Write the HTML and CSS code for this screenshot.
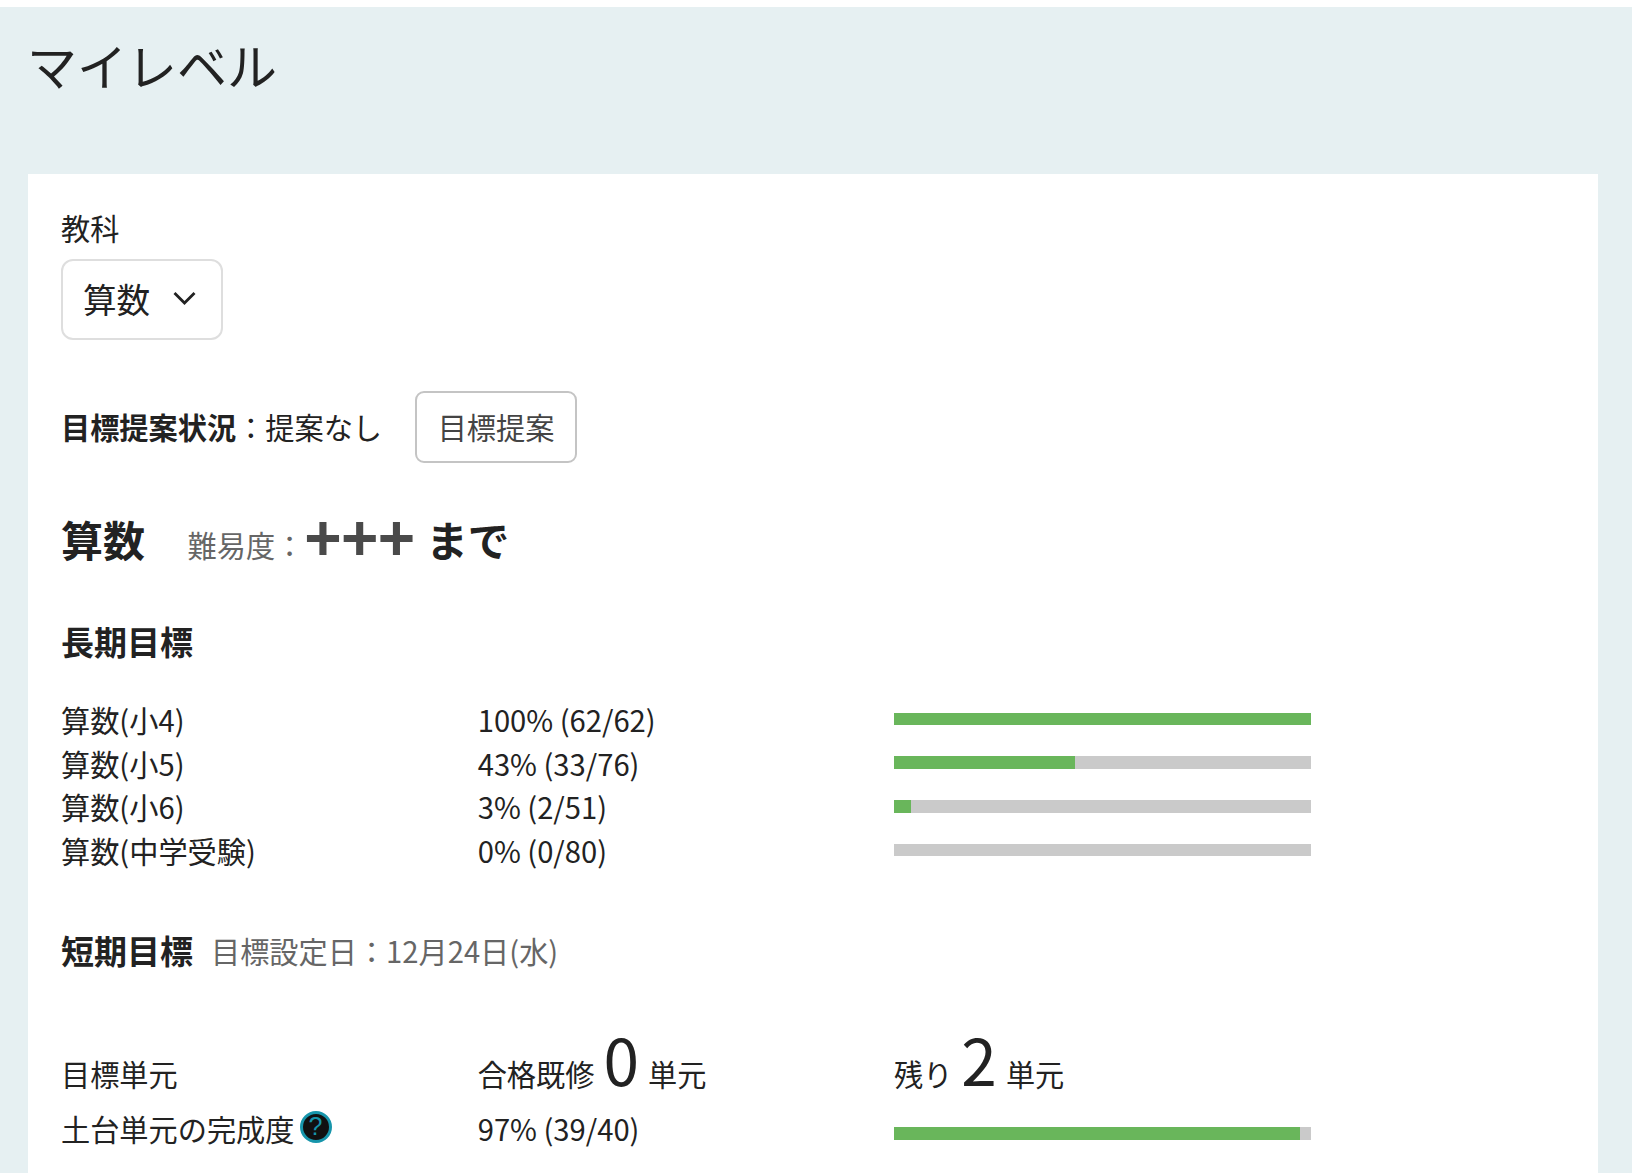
FILE: index.html
```html
<!DOCTYPE html>
<html lang="ja">
<head>
<meta charset="utf-8">
<title>マイレベル</title>
<link rel="stylesheet" href="styles.css">
</head>
<body>
<main class="page">
  <h1 class="page-title">マイレベル</h1>
  <section class="card">
    <div class="field-label">教科</div>
    <div class="select">
      <span>算数</span>
      <svg class="chevron" viewBox="0 0 24 14" aria-hidden="true"><path d="M2 2l10 10L22 2"/></svg>
    </div>
    <div class="proposal">
      <div class="proposal-text"><strong>目標提案状況</strong>：提案なし</div>
      <button class="btn" type="button">目標提案</button>
    </div>
    <div class="subject">
      <h2 class="subject-name">算数</h2>
      <span class="difficulty">難易度：</span><span class="plus">+++</span>
      <span class="until">まで</span>
    </div>
    <h3 class="section-title">長期目標</h3>
    <div class="rows">
      <div>算数(小4)</div><div>100% (62/62)</div><div class="bar"><div class="fill" style="width:100%"></div></div>
      <div>算数(小5)</div><div>43% (33/76)</div><div class="bar"><div class="fill" style="width:43.4%"></div></div>
      <div>算数(小6)</div><div>3% (2/51)</div><div class="bar"><div class="fill" style="width:4%"></div></div>
      <div>算数(中学受験)</div><div>0% (0/80)</div><div class="bar"></div>
    </div>
    <div class="short-head">
      <h3 class="section-title short-title">短期目標</h3>
      <span class="date">目標設定日：12月24日(水)</span>
    </div>
    <div class="goal-rows">
      <div class="goal-cell">目標単元</div>
      <div class="goal-cell">合格既修<span class="big">0</span>単元</div>
      <div class="goal-cell">残り<span class="big">2</span>単元</div>
      <div class="found-label">土台単元の完成度<span class="help">?</span></div>
      <div class="found-value">97% (39/40)</div>
      <div class="bar found-bar"><div class="fill" style="width:97.3%"></div></div>
    </div>
  </section>
</main>
</body>
</html>
```
FILE: styles.css
```css
* { box-sizing: border-box; }
html, body { margin: 0; height: 100%; background: #fff; }
body {
  padding-top: 7px;
  overflow: hidden;
  font-family: "Noto Sans CJK JP", "Noto Sans", sans-serif;
  font-size: 29.2px;
  line-height: 1.5;
  color: #222;
}
.page {
  height: 100%;
  background: #e6f0f2;
  padding: 0 34px 0 28px;
  overflow: hidden;
}
.page-title {
  margin: 0 0 0 -1px;
  height: 167px;
  padding-top: 19px;
  font-size: 50px;
  font-weight: 400;
  line-height: 76px;
}
.card {
  background: #fff;
  height: 1100px;
  padding: 31px 33px 0;
}
.field-label { line-height: 44px; }
.select {
  margin-top: 10px;
  width: 162px;
  height: 81px;
  border: 2px solid #dedede;
  border-radius: 12px;
  display: flex;
  align-items: center;
  padding: 0 0 0 20px;
  font-size: 33.6px;
}
.chevron {
  width: 25px;
  height: 14px;
  margin: 0 0 3px 22px;
  fill: none;
  stroke: #222;
  stroke-width: 2.8;
}
.proposal {
  margin-top: 51px;
  display: flex;
  align-items: center;
  gap: 33px;
}
.proposal-text strong { font-weight: 700; }
.btn {
  width: 162px;
  height: 72px;
  padding: 0;
  background: #fff;
  border: 2px solid #c4c4c4;
  border-radius: 9px;
  font: inherit;
  color: #444;
}
.subject {
  margin-top: 37px;
  height: 78px;
  line-height: 78px;
}
.subject-name {
  display: inline;
  margin: 0;
  font-size: 42px;
  font-weight: 700;
}
.difficulty { margin-left: 36px; color: #666; }
.plus {
  vertical-align: -3px;
  font-family: "Liberation Sans", sans-serif;
  font-size: 64px;
  font-weight: 700;
  line-height: 1;
  color: #4a4a4a;
  letter-spacing: -0.6px;
}
.until {
  margin-left: 5px;
  font-size: 41.6px;
  font-weight: 700;
}
.section-title {
  margin: 36px 0 0;
  font-size: 33px;
  font-weight: 700;
  line-height: 54px;
}
.rows {
  margin-top: 30px;
  display: grid;
  grid-template-columns: 416.7px 416.3px 417px;
  grid-auto-rows: 43.75px;
  align-items: center;
}
.bar {
  height: 12.5px;
  margin-top: -2px;
  background: #cacaca;
}
.fill { height: 100%; background: #69b65b; }
.short-head {
  margin-top: 50px;
  display: flex;
  align-items: center;
}
.short-title { margin: 0; }
.date { margin: 2px 0 0 18px; color: #666; }
.goal-rows {
  margin-top: 42px;
  display: grid;
  grid-template-columns: 416.7px 416.3px 417px;
  grid-template-rows: 76px 55px;
}
.goal-cell { align-self: end; line-height: 44px; display: flex; align-items: baseline; }
.big { font-size: 64px; line-height: 44px; margin: 0 9px 0 9px; }
.found-label, .found-value { margin-top: 11px; line-height: 44px; }
.found-label { display: flex; align-items: center; }
.found-bar { align-self: start; margin-top: 32px; }
.help {
  width: 32px;
  height: 32px;
  margin: -3px 0 0 5px;
  border: 3px solid #1795ab;
  border-radius: 50%;
  background: #111;
  color: #1795ab;
  display: flex;
  align-items: center;
  justify-content: center;
  font-family: "Liberation Sans", sans-serif;
  font-size: 25px;
  line-height: 1;
}
```
